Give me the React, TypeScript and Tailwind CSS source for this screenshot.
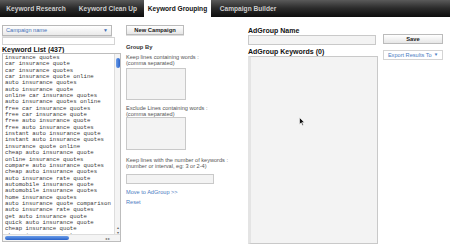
const keywords = [
  "insurance quotes",
  "car insurance quote",
  "car insurance quotes",
  "car insurance quote online",
  "auto insurance quotes",
  "auto insurance quote",
  "online car insurance quotes",
  "auto insurance quotes online",
  "free car insurance quotes",
  "free car insurance quote",
  "free auto insurance quote",
  "free auto insurance quotes",
  "instant auto insurance quote",
  "instant auto insurance quotes",
  "insurance quote online",
  "cheap auto insurance quote",
  "online insurance quotes",
  "compare auto insurance quotes",
  "cheap auto insurance quotes",
  "auto insurance rate quote",
  "automobile insurance quote",
  "automobile insurance quotes",
  "home insurance quotes",
  "auto insurance quote comparison",
  "auto insurance rate quotes",
  "get auto insurance quote",
  "quick auto insurance quote",
  "cheap insurance quote",
  "cheap insurance quotes",
];

const tabs = [
  { label: "Keyword Research", w: "w-[72px]" },
  { label: "Keyword Clean Up", w: "w-[72px]" },
  { label: "Keyword Grouping", w: "w-[67px]", active: true },
  { label: "Campaign Builder", w: "w-[74px]" },
];

function Tabs() {
  return (
    <div className="flex h-[17px] bg-gradient-to-b from-[#5a5a5a] via-[#2a2a2a] to-[#0e0e0e]">
      {tabs.map((t) => (
        <div
          key={t.label}
          className={
            "flex items-center justify-center text-[6.6px] font-bold " +
            t.w +
            (t.active ? " bg-white text-[#111]" : " text-[#cfcfcf]")
          }
        >
          {t.label}
        </div>
      ))}
    </div>
  );
}

function Box({ className }: { className: string }) {
  return <div className={"border border-[#c9c9c9] bg-[#f3f3f3] " + className} />;
}

function Label({ lines }: { lines: string[] }) {
  return (
    <div className="text-[5.6px] leading-[6px] text-[#555]">
      {lines.map((l) => (
        <div key={l}>{l}</div>
      ))}
    </div>
  );
}

function KeywordList() {
  return (
    <div className="relative h-[189px] w-[119px] border border-[#bdbdbd] bg-white">
      <div className="pl-[2px] pt-[1px] font-['Liberation_Mono',monospace] text-[5.7px] leading-[6.35px] text-[#3a3a3a]">
        {keywords.map((k) => (
          <div key={k} className="whitespace-pre">
            {k}
          </div>
        ))}
      </div>
      {/* vertical scrollbar */}
      <div className="absolute right-0 top-0 flex h-[181px] w-[6px] flex-col border-l border-[#ddd] bg-[#f4f4f4]">
        <div className="mx-auto mt-[4px] h-[10px] w-[4px] rounded-full bg-gradient-to-r from-[#6b9de8] to-[#2a62c9]" />
        <div className="flex-1" />
        <div className="text-center text-[4px] leading-[5px] text-[#666]">▴</div>
        <div className="text-center text-[4px] leading-[5px] text-[#666]">▾</div>
      </div>
      {/* horizontal scrollbar */}
      <div className="absolute bottom-0 left-0 right-0 flex h-[7px] items-center border-t border-[#ddd] bg-[#f4f4f4] px-[2px]">
        <div className="h-[4px] w-[64px] rounded-full bg-gradient-to-b from-[#6b9de8] to-[#2a62c9]" />
        <div className="flex-1" />
        <div className="mr-[8px] text-[4px] leading-[5px] text-[#666]">◂ ▸</div>
      </div>
    </div>
  );
}

export default function App() {
  return (
    <div className="relative h-[249px] w-[450px] overflow-hidden bg-white font-['Liberation_Sans',Arial,sans-serif]">
      <Tabs />
      <div className="flex pl-[2px] pt-[8px]">
        {/* left column */}
        <div className="flex w-[124px] flex-col">
          <div className="flex h-[11px] w-[110px] items-center justify-between border border-[#b8b8b8] bg-gradient-to-b from-white to-[#eaeaea] px-[3px] shadow-[0_1px_0_#ddd]">
            <span className="text-[5.6px] text-[#3f6fb6]">Campaign name</span>
            <span className="text-[5px] text-[#3f6fb6]">▼</span>
          </div>
          <div className="mt-[1px] h-[8px] w-[113px] border border-[#d4d4d4] bg-white" />
          <div className="mt-[1px] text-[7px] leading-[7px] font-bold text-[#111]">Keyword List (437)</div>
          <KeywordList />
        </div>

        {/* middle column */}
        <div className="flex w-[122px] flex-col">
          <div className="flex h-[10px] w-[58px] items-center justify-center border border-[#bbb] bg-gradient-to-b from-white to-[#e6e6e6] text-[5.8px] font-bold text-[#222] shadow-[0_1px_0_#ddd]">
            New Campaign
          </div>
          <div className="mt-[9px] text-[5.8px] leading-[7px] font-bold text-[#333]">Group By</div>
          <div className="mt-[3px]">
            <Label lines={["Keep lines containing words :", "(comma separated)"]} />
          </div>
          <Box className="mt-[2px] h-[32px] w-[60px]" />
          <div className="mt-[5px]">
            <Label lines={["Exclude Lines containing words :", "(comma separated)"]} />
          </div>
          <Box className="mt-[0px] h-[33px] w-[60px]" />
          <div className="mt-[7px]">
            <Label lines={["Keep lines with the number of keywords :", "(number or interval, eg: 3 or 2-4)"]} />
          </div>
          <Box className="mt-[5px] h-[10px] w-[88px]" />
          <div className="mt-[5px] text-[5.6px] leading-[7px] text-[#4a7cc2]">Move to AdGroup &gt;&gt;</div>
          <div className="mt-[3px] text-[5.6px] leading-[7px] text-[#4a7cc2]">Reset</div>
        </div>

        {/* right column */}
        <div className="flex flex-col">
          <div className="mt-[2px] flex">
            <div className="flex w-[135px] flex-col">
              <div className="text-[7px] leading-[7px] font-bold text-[#111]">AdGroup Name</div>
              <Box className="mt-[1px] h-[10px] w-[128px]" />
              <div className="mt-[3px] text-[7px] leading-[7px] font-bold text-[#111]">AdGroup Keywords (0)</div>
              <Box className="mt-[1px] h-[188px] w-[130px] border-l-[3px] border-l-[#e4e4e4]" />
            </div>
            <div className="flex w-[60px] flex-col pt-[7px]">
              <div className="flex h-[10px] w-[60px] items-center justify-center border border-[#bbb] bg-gradient-to-b from-white to-[#e6e6e6] text-[5.8px] font-bold text-[#222]">
                Save
              </div>
              <div className="mt-[6px] flex h-[10px] w-[60px] items-center justify-center gap-[2px] border border-[#d4d4d4] bg-white text-[5.6px] text-[#4a7cc2]">
                Export Results To <span className="text-[4.5px]">▼</span>
              </div>
            </div>
          </div>
        </div>
      </div>

      {/* mouse pointer */}
      <svg className="absolute left-[299px] top-[117px]" width="6" height="9" viewBox="0 0 6 9">
        <path d="M0.5 0.5 L0.5 7.5 L2.2 5.8 L3.4 8.5 L4.4 8 L3.3 5.4 L5.5 5.4 Z" fill="#111" stroke="#fff" strokeWidth="0.6" />
      </svg>
    </div>
  );
}
